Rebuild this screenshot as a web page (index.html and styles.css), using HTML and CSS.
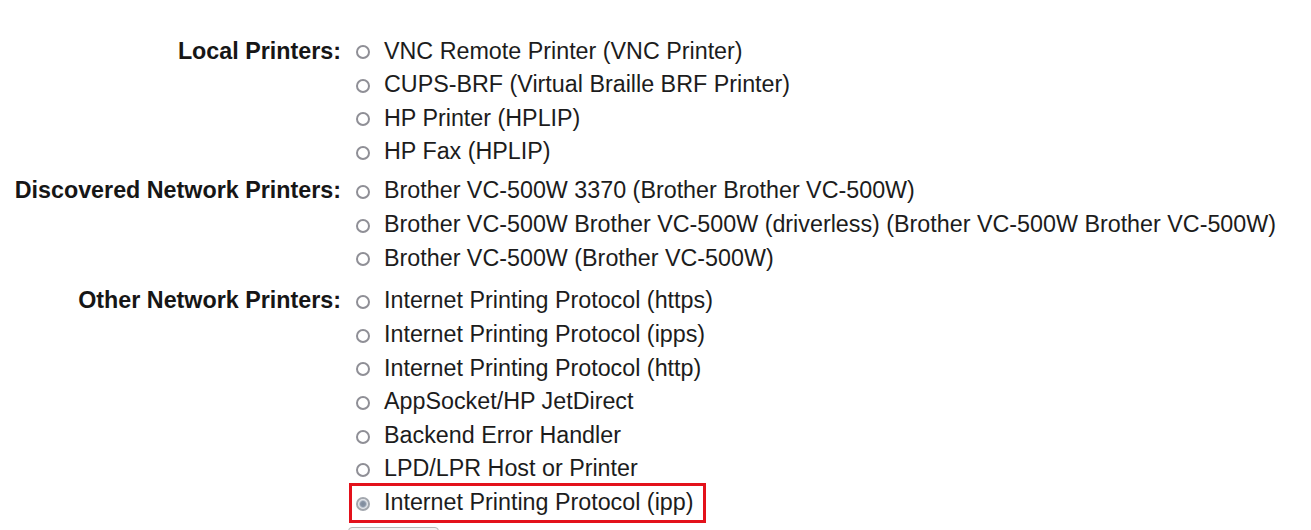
FILE: index.html
```html
<!DOCTYPE html>
<html>
<head>
<meta charset="utf-8">
<title>Add Printer</title>
<link rel="stylesheet" href="styles.css">
</head>
<body>
<form class="form">
  <div class="grid">
    <div class="label">Local Printers:</div>
    <div class="group">
      <label class="opt"><input type="radio" name="dev" class="radio"><span>VNC Remote Printer (VNC Printer)</span></label>
      <label class="opt"><input type="radio" name="dev" class="radio"><span>CUPS-BRF (Virtual Braille BRF Printer)</span></label>
      <label class="opt"><input type="radio" name="dev" class="radio"><span>HP Printer (HPLIP)</span></label>
      <label class="opt"><input type="radio" name="dev" class="radio"><span>HP Fax (HPLIP)</span></label>
    </div>

    <div class="label gap-discovered">Discovered Network Printers:</div>
    <div class="group gap-discovered">
      <label class="opt"><input type="radio" name="dev" class="radio"><span>Brother VC-500W 3370 (Brother Brother VC-500W)</span></label>
      <label class="opt"><input type="radio" name="dev" class="radio"><span>Brother VC-500W Brother VC-500W (driverless) (Brother VC-500W Brother VC-500W)</span></label>
      <label class="opt"><input type="radio" name="dev" class="radio"><span>Brother VC-500W (Brother VC-500W)</span></label>
    </div>

    <div class="label gap-other">Other Network Printers:</div>
    <div class="group gap-other">
      <label class="opt"><input type="radio" name="dev" class="radio"><span>Internet Printing Protocol (https)</span></label>
      <label class="opt"><input type="radio" name="dev" class="radio"><span>Internet Printing Protocol (ipps)</span></label>
      <label class="opt"><input type="radio" name="dev" class="radio"><span>Internet Printing Protocol (http)</span></label>
      <label class="opt"><input type="radio" name="dev" class="radio"><span>AppSocket/HP JetDirect</span></label>
      <label class="opt"><input type="radio" name="dev" class="radio"><span>Backend Error Handler</span></label>
      <label class="opt"><input type="radio" name="dev" class="radio"><span>LPD/LPR Host or Printer</span></label>
      <label class="opt highlight"><input type="radio" name="dev" class="radio" checked><span>Internet Printing Protocol (ipp)</span></label>
    </div>

    <div class="label"></div>
    <div class="actions"><button type="button" class="btn" aria-label="Continue"></button></div>
  </div>
</form>
</body>
</html>
```

FILE: styles.css
```css
html, body {
  margin: 0;
  padding: 0;
  background: #ffffff;
}

body {
  font-family: "Liberation Sans", Arial, sans-serif;
  font-size: 23.3px;
  color: #1c1c1c;
  overflow: hidden;
}

.form {
  padding-top: 34.5px;
}

.grid {
  display: grid;
  grid-template-columns: 341px 1fr;
  column-gap: 11px;
}

.label {
  text-align: right;
  font-weight: bold;
  line-height: 33.6px;
  color: #161616;
}

.group {
  display: flex;
  flex-direction: column;
  align-items: flex-start;
}

.gap-discovered {
  margin-top: 5.6px;
}

.gap-other {
  margin-top: 9.2px;
}

.opt {
  display: flex;
  align-items: center;
  height: 33.6px;
  line-height: 33.6px;
  white-space: nowrap;
}

.radio {
  -webkit-appearance: none;
  appearance: none;
  box-sizing: border-box;
  width: 14px;
  height: 14px;
  margin: 2px 14px 0 4px;
  border: 2px solid #8f8f96;
  border-radius: 50%;
  background: #ffffff;
  flex: none;
}

.radio:checked {
  background: radial-gradient(circle, #7d8a9b 0, #8995a6 2.5px, #d5dae1 4px, #f4f5f7 5px);
  border-color: #a3a7ae;
}

.highlight {
  outline: 3px solid #e3111b;
  padding-right: 10px;
}

.actions {
  padding-top: 7px;
}

.btn {
  display: block;
  width: 91px;
  height: 48px;
  margin-left: -4px;
  border: 1px solid #b8b8b8;
  border-radius: 4px;
  background: #f4f4f4;
}
```
